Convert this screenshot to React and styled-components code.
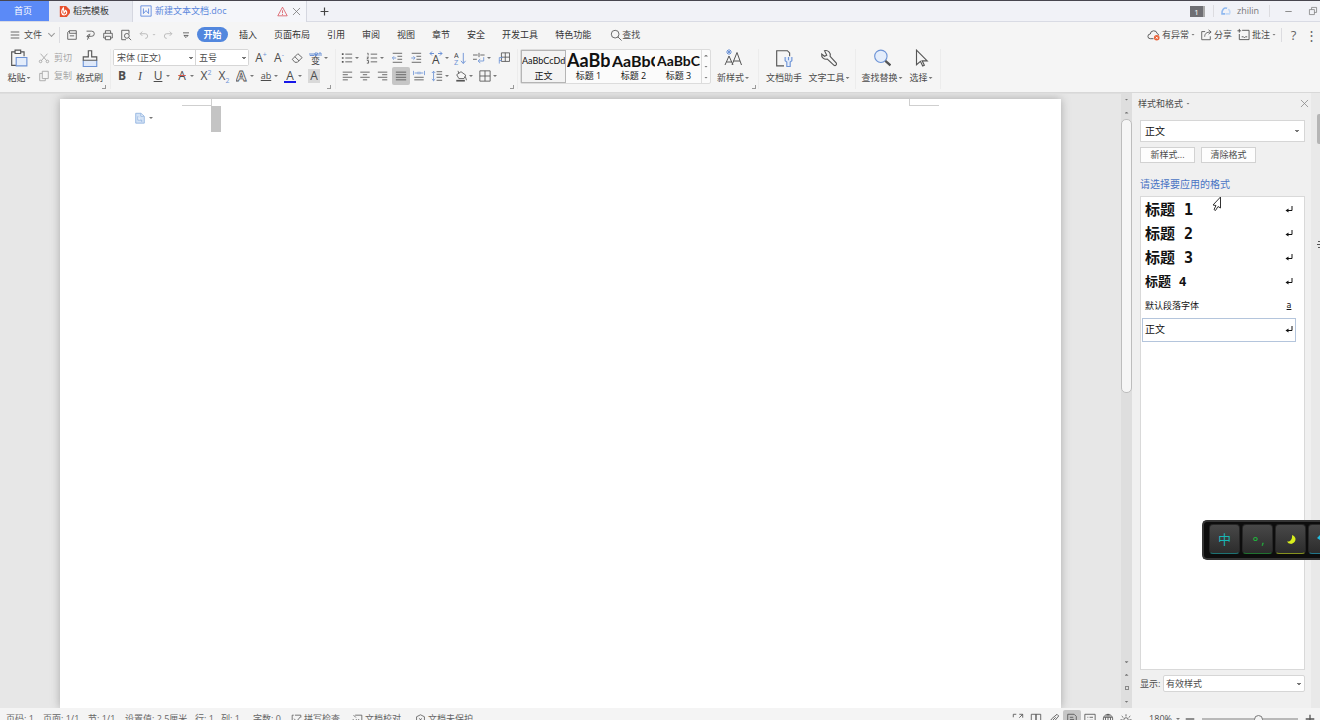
import { useState } from "react";
import styled, { createGlobalStyle } from "styled-components";

const tabs = ["插入", "页面布局", "引用", "审阅", "视图", "章节", "安全", "开发工具", "特色功能"];

const gallery = [
  { label: "正文", sample: "AaBbCcDd", size: 9 },
  { label: "标题 1", sample: "AaBb", size: 18, bold: true },
  { label: "标题 2", sample: "AaBbC", size: 16, bold: true },
  { label: "标题 3", sample: "AaBbCc", size: 14, bold: true },
];

const styleList = [
  { name: "标题 1", size: 15, bold: true },
  { name: "标题 2", size: 15, bold: true },
  { name: "标题 3", size: 15, bold: true },
  { name: "标题 4", size: 13, bold: true },
  { name: "默认段落字体", size: 9, mark: "a" },
  { name: "正文", size: 10 },
];

const blue = "#6d93d6";

const icons = {
  menu: <path d="M2 3.5h10M2 7h10M2 10.5h10" />,
  save: <path d="M2 4l2-2h8v10h-10zM4 2v3h8M4.500 8h5" />,
  output: <path d="M3 2.500h6a3 3 0 0 1 0 6h-5.500M6 6l-2.500 2.500 2.500 2.500M4 12.500l3-7" />,
  print: <path d="M4 5v-3h6v3M4 10.500h-2v-5.500h10v5.500h-2M4 8.500h6v4h-6z" />,
  preview: (
    <>
      <path d="M7 12.500H2v-11h8.500v4" />
      <circle cx="8" cy="8" r="2.800" />
      <path d="M10 10l3 3" />
    </>
  ),
  undo: <path d="M5 3l-2.500 2.500 2.500 2.500M2.500 5.500h6a2.500 2.500 0 0 1 0 5.500" />,
  redo: <path d="M9 3l2.500 2.500-2.500 2.500M11.500 5.500h-6a2.500 2.500 0 0 0 0 5.500" />,
  more: <path d="M3.500 4.500h7M4.500 7.500h5L7 10z" />,
  search: (
    <>
      <circle cx="6" cy="6" r="4.500" />
      <path d="M9 9l4.500 4.500" />
    </>
  ),
  cut: (
    <>
      <path d="M3 2l7 8M11 2l-7 8" />
      <circle cx="3" cy="11" r="1.500" />
      <circle cx="11" cy="11" r="1.500" />
    </>
  ),
  copy: <path d="M5 1.500h7v8.500h-7zM5 4h-3v8.500h6.500v-2.500" />,
  eraser: <path d="M1.500 8.500l6.500-6.500 5 4.500-5.500 5.500h-3zM4.500 5.500l5 5" />,
  bullets: (
    <>
      <path d="M5 2.500h8M5 7h8M5 11.500h8" />
      <path d="M2 1.500v2M2 6v2M2 10.500v2" strokeWidth="2" />
    </>
  ),
  numbers: (
    <>
      <path d="M5.500 2.500h7.500M5.500 7h7.500M5.500 11.500h7.500" />
      <path d="M1.500 1.500h1v2.500M1 6h2l-2 2h2M1 10h2v3h-2" />
    </>
  ),
  outdent: (
    <>
      <path d="M2 1.500h11M7.500 5h5.500M7.500 8.500h5.500M2 12h11" />
      <path d="M6 7h-4M3.500 5l-2 2 2 2" stroke={blue} />
    </>
  ),
  indent: (
    <>
      <path d="M2 1.500h11M7.500 5h5.500M7.500 8.500h5.500M2 12h11" />
      <path d="M1.500 7h4M4 5l2 2-2 2" stroke={blue} />
    </>
  ),
  wrap: (
    <>
      <path d="M0 3.500h5.500M0 8.500h4.500M8.500 3.500h5M7 1v5" />
      <path d="M12.500 6v4.500h-6M8.500 8l-2.500 2.500 2.500 2.500" stroke={blue} />
    </>
  ),
  ruler: (
    <>
      <path d="M4 1h9.500v10h-9.500zM8.500 1v10M4 6h9.500" />
      <path d="M1.500 13.500v-7h4M1.500 10h3" stroke={blue} />
    </>
  ),
  left: <path d="M2 2.500h11M2 5.500h6M2 8.500h11M2 11.500h6" />,
  center: <path d="M1.500 2.500h11M4.500 5.500h5M1.500 8.500h11M4.500 11.500h5" />,
  right: <path d="M1 2.500h11M6 5.500h6M1 8.500h11M6 11.500h6" />,
  justify: <path d="M1 2.500h12M1 5.500h12M1 8.500h12M1 11.500h12" />,
  distribute: (
    <>
      <path d="M1.500 8.500h11M1.500 11.500h11" />
      <path d="M.5 1v5M13.500 1v5M2 3.500h4M8 3.500h4M6 2v3M8 2v3" stroke={blue} />
    </>
  ),
  spacing: (
    <>
      <path d="M6.500 2h6.500M6.500 5h6.500M6.500 8.500h6.500M6.500 12h6.500" />
      <path d="M3 1.500v11M1 3.500l2-2 2 2M1 10.500l2 2 2-2" stroke={blue} />
    </>
  ),
  bucket: (
    <>
      <path d="M2 5.500l5-3.500 5.500 4-2 4h-6zM4.500 4l-1-3M12 7.500l1.500 4.500" />
      <path d="M1.500 12.500h10" strokeWidth="2" />
    </>
  ),
  border: <path d="M1 1h12v12h-12zM7 1v12M1 7h12" />,
  paste: (
    <>
      <path d="M4.500 2.500h-3v12h4M9.500 2.500h3v4" />
      <path d="M4.500 1h5v3h-5z" />
      <path d="M5.500 7.500h9.500v7.500h-9.500z" fill="#e4edfb" stroke={blue} />
    </>
  ),
  brush: (
    <>
      <path d="M2 10v5.500h12v-5.500" fill="#dfe9fa" stroke={blue} />
      <path d="M6.500 7v-5.500h3v5.500h4.500v3h-12v-3z" />
    </>
  ),
  helper: (
    <>
      <path d="M8 15h-6.500v-13.500h9.500l2 2v3" />
      <path d="M9 7v3.500l1.500 1v4h3v-4l1.500-1v-3.500M12 7v3" fill="#e4edfb" stroke={blue} />
    </>
  ),
  wrench: (
    <path d="M4 1.500a4 4 0 0 1 5 5l5.500 6c.7 1.500-.8 2.800-2 2l-6-5.500a4 4 0 0 1-5-4.500l2.500 2 2-1z" />
  ),
  find: (
    <>
      <circle cx="7" cy="6.500" r="5.500" fill="#e4edfb" stroke={blue} />
      <path d="M11 10.500l4.500 4" strokeWidth="2" />
    </>
  ),
  pointer: <path d="M4 1l9.500 9.500h-4.500l2 4-1.500.7-2-4.200-3.500 3z" />,
  cloud: (
    <>
      <path d="M7 11.500h-3.500a2.500 2.500 0 0 1 0-5 3.800 3.800 0 0 1 7.500-.500 2 2 0 0 1 1.500 2" />
      <circle cx="10.500" cy="10.500" r="3" fill="#ea6238" stroke="none" />
      <path d="M9.500 9.500l2 2M11.500 9.500l-2 2" stroke="#fff" />
    </>
  ),
  share: <path d="M6 3h-4v9.500h10v-4M5.500 9c0-3.500 2-5.500 7-5.500M10 1l3 2.500-3 2.500" />,
  comment: <path d="M5.500 2.500h7.500v10h-10.500v-6M2.500 1v4M.5 3h4M5 9.500h2l1 1 1-1h2" />,
  docTag: (
    <>
      <path d="M1 1h12v12h-12z" />
      <path d="M4 4v6l3-3.500 3 3.500v-6" />
    </>
  ),
  warn: <path d="M7 1.500l6 11h-12zM7 5.500v3.500M7 10v1.500" />,
  close: <path d="M2.500 2.500l9 9M11.500 2.500l-9 9" />,
  plus: <path d="M7 2v10M2 7h10" strokeWidth="1.500" />,
  minus: <path d="M2 7h10" strokeWidth="1.500" />,
  restore: <path d="M2 5h7v7h-7zM5 5v-3h7v7h-3" />,
  swirl: (
    <>
      <path d="M9 3c-4-1.500-7 2-6.500 7h4" strokeWidth="2" />
      <path d="M7 10h5c1-2 .5-4.500-1.500-6" stroke="#c2d9f7" strokeWidth="2" />
    </>
  ),
  check: <path d="M3.500 1.500h-2v11h11v-4M5 1.500h7.500v3M4 6l3 3.500 5-6" />,
  proof: <path d="M4 1.500h8.500v11h-11v-6M2 1.500l3 3M5 6.500l4 4M9 6.500l-4 4" />,
  shield: <path d="M7 1l5 2.500v5.500l-5 4-5-4v-5.500zM5 5.500l4 3.500M9 5.500l-4 3.500" />,
  expand: <path d="M8.500 1.500h4v4M12.500 1.500l-4 4M1.500 5v-3.500h3.500M1.500 9v3.500h3.500M12.500 9v3.500h-3.500" />,
  book: <path d="M1.500 1.500h5.500v11h-5.500zM7 1.500h5.500v11h-5.500z" />,
  pen: <path d="M2 12.500l2-5.500 6.500-5.500 2 2-5.500 6.500zM4 10l5-5" />,
  page: <path d="M2 1.500h7.500l2.500 2.500v9h-10zM4.500 5h4M4.500 7.500h5M4.500 10h5" />,
  outline: <path d="M1 1.500h12v11h-12zM4 5h1M6.500 5h4M4 8.500h1M6.500 8.500h4" />,
  globe: (
    <>
      <circle cx="7" cy="7" r="5.500" />
      <path d="M7 1.500v11M2 5h10M2 9h10M7 1.500c-4 3-4 8 0 11M7 1.500c4 3 4 8 0 11" />
    </>
  ),
  sun: (
    <>
      <circle cx="7" cy="8" r="2.500" />
      <path d="M7 1.500v2.500M2 3.500l2 2M12 3.500l-2 2M.5 8h2.500M11 8h2.500M2 12.500l2-2M12 12.500l-2-2" />
    </>
  ),
  docBlue: <path d="M2 1.500h6l4 3.500v8h-10zM8 1.500v3.500h3.500M4.500 5v4.500h4.500v2" fill="#d4e3f6" />,
};

function Icon({ name, size = 12, box = 14, color }) {
  return (
    <Svg width={size} height={size} viewBox={`0 0 ${box} ${box}`} $color={color} aria-hidden="true">
      {icons[name]}
    </Svg>
  );
}

function Tool({ name, label, arrow, active, children }) {
  return (
    <ToolButton type="button" aria-label={label} $arrow={arrow} $active={active}>
      {name ? <Icon name={name} size={12} /> : children}
      {arrow && <Arrow />}
    </ToolButton>
  );
}

function Big({ name, label, arrow, width, children }) {
  return (
    <BigButton type="button" $width={width}>
      {children || <Icon name={name} size={18} box={16} />}
      <BigLabel>
        {label}
        {arrow && <Arrow />}
      </BigLabel>
    </BigButton>
  );
}

function ReturnMark() {
  return (
    <Svg width="8" height="8" viewBox="0 0 8 8" $color="#111" aria-hidden="true">
      <path d="M7 0v4.500h-5" />
      <path d="M3.500 2.500v4l-3-2z" fill="#111" stroke="none" />
    </Svg>
  );
}

function TitleBar() {
  return (
    <TitleStrip>
      <HomeTab type="button">首页</HomeTab>
      <DocTab type="button" $width={84}>
        <Svg width="11" height="11" viewBox="0 0 14 14" aria-hidden="true">
          <path d="M1 0h8l5 5v4l-4 5h-9z" fill="#e8502e" stroke="none" />
          <path d="M5.500 2.500c-3 4-3 8 1 9 4-.5 4-4 2-6l-2 3z" stroke="#fff" fill="none" strokeWidth="1.500" />
        </Svg>
        稻壳模板
      </DocTab>
      <DocTab type="button" $width={174} $active>
        <Icon name="docTag" size={12} color="#5b86dc" />
        <TabName>新建文本文档.doc</TabName>
        <Icon name="warn" size={11} color="#d9525a" />
        <Icon name="close" size={11} color="#777" />
      </DocTab>
      <PlainButton type="button" aria-label="新建" $width={34}>
        <Icon name="plus" size={11} color="#444" />
      </PlainButton>
      <Spacer />
      <Badge>1</Badge>
      <Divider $height={12} />
      <User href="#user">
        <Icon name="swirl" size={11} color="#8fb8ef" />
        zhilin
      </User>
      <Divider $height={12} />
      <PlainButton type="button" aria-label="最小化" $width={36}>
        <Icon name="minus" size={9} color="#888" />
      </PlainButton>
      <PlainButton type="button" aria-label="还原" $width={14}>
        <Icon name="restore" size={10} color="#777" />
      </PlainButton>
    </TitleStrip>
  );
}

function MenuBar() {
  return (
    <MenuStrip>
      <FileButton type="button">
        <Icon name="menu" size={12} />
        文件
        <Chevron />
      </FileButton>
      <Divider $height={16} />
      <QuickBar>
        <Tool name="save" label="保存" />
        <Tool name="output" label="输出" />
        <Tool name="print" label="打印" />
        <Tool name="preview" label="打印预览" />
        <Faded>
          <Tool name="undo" label="撤销" arrow />
          <Tool name="redo" label="恢复" />
        </Faded>
        <Tool name="more" label="自定义" />
      </QuickBar>
      <StartTab type="button">开始</StartTab>
      <TabList>
        {tabs.map((tab) => (
          <MenuTab type="button" key={tab}>{tab}</MenuTab>
        ))}
      </TabList>
      <SearchButton type="button">
        <Icon name="search" size={12} />
        查找
      </SearchButton>
      <Spacer />
      <RightTools>
        <SmallAction type="button"><Icon name="cloud" size={13} />有异常<Arrow /></SmallAction>
        <SmallAction type="button"><Icon name="share" size={12} />分享</SmallAction>
        <SmallAction type="button"><Icon name="comment" size={13} />批注<Arrow /></SmallAction>
        <Divider $height={14} />
        <HelpButton type="button" aria-label="帮助">?</HelpButton>
        <HelpButton type="button" aria-label="更多">⋮</HelpButton>
      </RightTools>
    </MenuStrip>
  );
}

function Ribbon() {
  return (
    <RibbonStrip>
      <Group>
        <Big name="paste" label="粘贴" arrow width={38} />
        <Stack>
          <ClipButton type="button" disabled><Icon name="cut" size={12} />剪切</ClipButton>
          <ClipButton type="button" disabled><Icon name="copy" size={12} />复制</ClipButton>
        </Stack>
        <Big name="brush" label="格式刷" width={31} />
        <Launcher $after={4} />
      </Group>
      <Group $pad={2}>
        <Stack>
          <ToolRow>
            <Combo>
              <FontSelect aria-label="字体" $width={81}><option>宋体 (正文)</option></FontSelect>
              <FontSelect aria-label="字号" $width={53}><option>五号</option></FontSelect>
            </Combo>
            <Tool label="增大字号"><Letter>A<sup>+</sup></Letter></Tool>
            <Tool label="减小字号"><Letter>A<sup>-</sup></Letter></Tool>
            <Tool name="eraser" label="清除格式" />
            <Tool label="拼音指南" arrow>
              <Pinyin>
                <path d="M1 2v2.500h2v-2.500M3 4.500h2v-2.500M6 3.500h2.500v-1.500h-2.500v2.500h2.500M10 5v-3h2v3" stroke={blue} />
                <text x="2" y="13" stroke="none" fill="#444">变</text>
              </Pinyin>
            </Tool>
          </ToolRow>
          <ToolRow>
            <Tool label="加粗"><Letter $bold>B</Letter></Tool>
            <Tool label="倾斜"><Letter $italic>I</Letter></Tool>
            <Tool label="下划线" arrow><Letter $line="underline">U</Letter></Tool>
            <Tool label="删除线" arrow><Letter $line="line-through #d8574f">A</Letter></Tool>
            <Tool label="上标"><Letter>X<sup>2</sup></Letter></Tool>
            <Tool label="下标"><Letter>X<sub>2</sub></Letter></Tool>
            <Tool label="文字效果" arrow>
              <Svg width="12" height="14" viewBox="0 0 12 14" aria-hidden="true">
                <text x="0" y="12" fontSize="15" fontWeight="700" strokeWidth="0.8">A</text>
              </Svg>
            </Tool>
            <Tool label="突出显示" arrow><SmallLetter>ab</SmallLetter></Tool>
            <Tool label="字体颜色" arrow><ColorLetter>A</ColorLetter></Tool>
            <Tool label="字符底纹"><ShadeLetter>A</ShadeLetter></Tool>
          </ToolRow>
        </Stack>
        <Launcher $after={2} />
      </Group>
      <Group $pad={2}>
        <Stack>
          <ToolRow $gap={1}>
            <Tool name="bullets" label="项目符号" arrow />
            <Tool name="numbers" label="编号" arrow />
            <Tool name="outdent" label="减少缩进" />
            <Tool name="indent" label="增加缩进" />
            <Tool label="中文版式" arrow>
              <Svg width="14" height="14" viewBox="0 0 14 14" aria-hidden="true">
                <path d="M5 2.500h-4M3 .5l-2 2 2 2M9 2.500h4M11 .5l2 2-2 2" stroke={blue} />
                <text x="3" y="13" fontSize="12" fill="#444" stroke="none">A</text>
              </Svg>
            </Tool>
            <Tool label="排序">
              <Svg width="13" height="13" viewBox="0 0 14 14" aria-hidden="true">
                <text x="0" y="6" fontSize="8" fill="#444" stroke="none">A</text>
                <text x="0" y="14" fontSize="8" fill={blue} stroke="none">Z</text>
                <path d="M10 1v11M7.500 9.500l2.500 3 2.500-3" stroke={blue} />
              </Svg>
            </Tool>
            <Tool name="wrap" label="换行" arrow />
            <Tool name="ruler" label="制表位" />
          </ToolRow>
          <ToolRow>
            <Tool name="left" label="左对齐" />
            <Tool name="center" label="居中" />
            <Tool name="right" label="右对齐" />
            <Tool name="justify" label="两端对齐" active />
            <Tool name="distribute" label="分散对齐" />
            <Tool name="spacing" label="行距" arrow />
            <Tool name="bucket" label="底纹" arrow />
            <Tool name="border" label="边框" arrow />
          </ToolRow>
        </Stack>
        <Launcher $after={1} />
      </Group>
      <Group $pad={2}>
        <Gallery>
          {gallery.map((g, i) => (
            <Card type="button" key={g.label} $active={i === 0}>
              <Sample $size={g.size} $bold={g.bold}>{g.sample}</Sample>
              <span>{g.label}</span>
            </Card>
          ))}
          <GalleryScroll>
            <Arrow $up />
            <Arrow />
            <Arrow />
          </GalleryScroll>
        </Gallery>
        <Big label="新样式" arrow width={44}>
          <Svg width="18" height="18" viewBox="0 0 18 18" aria-hidden="true">
            <path d="M5 0v6M2 3h6M3 1l4 4M7 1l-4 4" stroke={blue} />
            <path d="M1 16l4-9 4 9M2.500 13h5M8 16l5-12.500 4.500 12.500M9.500 12h6.500" />
          </Svg>
        </Big>
        <Launcher $after={0} />
      </Group>
      <Group $pad={3}>
        <Big name="helper" label="文档助手" width={44} />
        <Big name="wrench" label="文字工具" arrow width={46} />
      </Group>
      <Group $pad={3}>
        <Big name="find" label="查找替换" arrow width={46} />
        <Big name="pointer" label="选择" arrow width={32} />
      </Group>
    </RibbonStrip>
  );
}

function StylePane() {
  const [current, setCurrent] = useState("正文");

  return (
    <Pane>
      <PaneHead>
        样式和格式
        <Arrow />
        <Spacer />
        <CloseButton type="button" aria-label="关闭"><Icon name="close" size={11} color="#888" /></CloseButton>
      </PaneHead>
      <PaneSelect aria-label="当前样式" value={current} onChange={(e) => setCurrent(e.target.value)}>
        {styleList.map((s) => (
          <option key={s.name}>{s.name}</option>
        ))}
      </PaneSelect>
      <PaneButtons>
        <PaneButton type="button">新样式...</PaneButton>
        <PaneButton type="button">清除格式</PaneButton>
      </PaneButtons>
      <PaneTitle>请选择要应用的格式</PaneTitle>
      <List>
        {styleList.map((s) => (
          <ListRow
            type="button"
            key={s.name}
            $size={s.size}
            $bold={s.bold}
            $active={s.name === current}
            onClick={() => setCurrent(s.name)}
          >
            {s.name}
            {s.mark ? <CharMark>{s.mark}</CharMark> : <ReturnMark />}
          </ListRow>
        ))}
      </List>
      <PaneFoot>
        <label htmlFor="filter">显示:</label>
        <FilterSelect id="filter"><option>有效样式</option></FilterSelect>
      </PaneFoot>
    </Pane>
  );
}

function StatusBar() {
  const [zoom, setZoom] = useState(180);

  return (
    <StatusStrip>
      <StatusItem $width={37}>页码: 1</StatusItem>
      <StatusItem $width={45}>页面: 1/1</StatusItem>
      <StatusItem $width={37}>节: 1/1</StatusItem>
      <StatusItem $width={70}>设置值: 2.5厘米</StatusItem>
      <StatusItem $width={26}>行: 1</StatusItem>
      <StatusItem $width={32}>列: 1</StatusItem>
      <StatusItem $width={38}>字数: 0</StatusItem>
      <StatusItem $width={61}><Icon name="check" size={11} />拼写检查</StatusItem>
      <StatusItem $width={63}><Icon name="proof" size={11} />文档校对</StatusItem>
      <StatusItem $width={60}><Icon name="shield" size={11} />文档未保护</StatusItem>
      <Spacer />
      <Tool name="expand" label="全屏" />
      <Tool name="book" label="阅读版式" />
      <Tool name="pen" label="写作模式" />
      <Tool name="page" label="页面视图" active />
      <Tool name="outline" label="大纲" />
      <Tool name="globe" label="网页版式" />
      <Tool name="sun" label="护眼模式" />
      <ZoomLabel>{zoom}%<Arrow /></ZoomLabel>
      <Tool name="minus" label="缩小" />
      <Slider
        type="range"
        aria-label="缩放"
        min="0"
        max="300"
        value={zoom}
        onChange={(e) => setZoom(e.target.value)}
      />
      <Tool name="plus" label="放大" />
    </StatusStrip>
  );
}

function ImeBar() {
  return (
    <Ime>
      <Key type="button" $color="#19b5b5">中</Key>
      <Key type="button" $color="#1fb33c">
        <span>⚬,</span>
      </Key>
      <Key type="button" $color="#d8ee1c" aria-label="半角">
        <svg width="10" height="10" viewBox="0 0 10 10" aria-hidden="true">
          <path d="M6 1a4.500 4.500 0 1 1-5 6.500c3.500.5 5.500-2.500 5-6.500z" fill="#d8ee1c" />
        </svg>
      </Key>
      <Key type="button" $color="#22bde0" aria-label="皮肤">
        <svg width="14" height="12" viewBox="0 0 14 12" aria-hidden="true">
          <path d="M0 5l4-4h6l4 4-3 2v5h-8v-5z" fill="#22bde0" />
        </svg>
      </Key>
    </Ime>
  );
}

export default function App() {
  return (
    <>
      <GlobalStyle />
      <Shell>
        <TitleBar />
        <MenuBar />
        <Ribbon />
        <Workspace>
          <Canvas>
            <Page>
              <Corners>
                <Corner />
                <Corner $right />
              </Corners>
              <FirstLine>
                <PageTool type="button" aria-label="文档选项">
                  <Icon name="docBlue" size={12} color="#91b3df" />
                  <Arrow />
                </PageTool>
                <Selection />
              </FirstLine>
            </Page>
          </Canvas>
          <ScrollBar>
            <ScrollCap>
              <Arrow />
              <Arrow $up />
            </ScrollCap>
            <Thumb />
            <Spacer />
            <ScrollFoot>
              <Arrow />
              <Arrow $up />
              <Dot />
              <Arrow />
            </ScrollFoot>
          </ScrollBar>
          <StylePane />
          <Rail>
            <RailThumb />
            <RailMark width="8" height="8" viewBox="0 0 8 8" aria-hidden="true">
              <path d="M1 1.500h7M0 4.500h8M1 7.500h7" />
            </RailMark>
          </Rail>
        </Workspace>
        <StatusBar />
      </Shell>
      <ImeBar />
      <Cursor width="10" height="16" viewBox="0 0 10 16" aria-hidden="true">
        <path d="M8.500 1v11l-2.500-1.500-2.500 4-1.500-1 2-4-3-.5z" fill="#fff" stroke="#333" />
      </Cursor>
    </>
  );
}

const GlobalStyle = createGlobalStyle`
  * {
    box-sizing: border-box;
  }
  body {
    margin: 0;
    overflow: hidden;
    background: #e7e7e7;
  }
  body, button, select, input {
    font-family: "Open Sans", "Noto Sans CJK SC", sans-serif;
    font-size: 9px;
    line-height: 12px;
    color: #4c4c4c;
  }
  button {
    border: 0;
    padding: 0;
    background: none;
    white-space: nowrap;
  }
`;
const Shell = styled.div`
  height: calc(100vh + 10px);
  display: flex;
  flex-direction: column;
`;
const Svg = styled.svg`
  flex: none;
  fill: none;
  stroke: ${(p) => p.$color || "#555"};
  stroke-width: 1;
`;
const Spacer = styled.div`
  flex: 1;
`;
const Divider = styled.div`
  width: 1px;
  height: ${(p) => p.$height}px;
  background: #dcdce0;
`;
const Arrow = styled.span`
  flex: none;
  width: 4px;
  height: 2px;
  background: #777;
  clip-path: ${(p) => (p.$up ? "polygon(50% 0, 100% 100%, 0 100%)" : "polygon(0 0, 100% 0, 50% 100%)")};
`;

/* title bar */
const TitleStrip = styled.header`
  flex: none;
  height: 22px;
  display: flex;
  align-items: center;
  border-top: 1px solid #48464f;
  border-bottom: 1px solid #d9dbe4;
  background: #f1f2f7;
`;
const HomeTab = styled.button`
  width: 49px;
  height: 20px;
  padding-right: 3px;
  background: #5b8af7;
  color: #fff;
`;
const DocTab = styled.button`
  width: ${(p) => p.$width}px;
  height: 21px;
  display: flex;
  align-items: center;
  gap: 3px;
  padding: 0 4px 0 ${(p) => (p.$active ? 7 : 10)}px;
  border-right: 1px solid #d5d7e0;
  background: ${(p) => (p.$active ? "#f5f6fa" : "#e8eaf1")};
  color: ${(p) => (p.$active ? "#5b86dc" : "#333")};
`;
const TabName = styled.span`
  flex: 1;
  text-align: left;
`;
const PlainButton = styled.button`
  width: ${(p) => p.$width}px;
  height: 20px;
  display: flex;
  align-items: center;
  justify-content: center;
`;
const Badge = styled.span`
  width: 15px;
  height: 11px;
  margin-right: 8px;
  border-right: 2px solid #aaa;
  background: #6f6f74;
  color: #fff;
  font-size: 8px;
  line-height: 11px;
  text-align: center;
`;
const User = styled.a`
  display: flex;
  align-items: center;
  gap: 6px;
  padding: 0 10px 0 6px;
  color: #777;
  text-decoration: none;
`;

/* menu row */
const MenuStrip = styled.nav`
  flex: none;
  height: 25px;
  display: flex;
  align-items: center;
  padding-left: 9px;
  background: #f5f5f5;
`;
const FileButton = styled.button`
  width: 50px;
  display: flex;
  align-items: center;
  gap: 3px;
`;
const Chevron = styled.span`
  width: 5px;
  height: 5px;
  margin: 0 0 3px 4px;
  border: solid #999;
  border-width: 0 1px 1px 0;
  transform: rotate(45deg);
`;
const QuickBar = styled.div`
  display: flex;
  width: 137px;
  padding-left: 3px;
`;
const Faded = styled.div`
  display: flex;
  opacity: 0.4;
`;
const ToolButton = styled.button`
  width: ${(p) => (p.$arrow ? 24 : 18)}px;
  height: 18px;
  display: flex;
  align-items: center;
  justify-content: ${(p) => (p.$arrow ? "flex-start" : "center")};
  gap: 2px;
  padding-left: ${(p) => (p.$arrow ? 3 : 0)}px;
  border-radius: 2px;
  background: ${(p) => (p.$active ? "#c6c6c6" : "none")};
`;
const StartTab = styled.button`
  width: 31px;
  height: 15px;
  border-radius: 8px;
  background: #5287de;
  color: #fff;
  font-weight: 700;
`;
const TabList = styled.div`
  display: flex;
  gap: 17px;
  padding: 0 19px 0 11px;
`;
const MenuTab = styled.button`
  color: #333;
`;
const SearchButton = styled.button`
  display: flex;
  align-items: center;
`;
const RightTools = styled.div`
  display: flex;
  align-items: center;
  gap: 5px;
  padding-right: 2px;
`;
const SmallAction = styled.button`
  display: flex;
  align-items: center;
  gap: 2px;
`;
const HelpButton = styled.button`
  width: 13px;
  font-size: 13px;
  color: #666;
`;

/* ribbon */
const RibbonStrip = styled.section`
  flex: none;
  height: 46px;
  display: flex;
  padding: 2px 0 3px;
  border-bottom: 1px solid #d8d8d8;
  background: #f5f5f5;
`;
const Group = styled.div`
  display: flex;
  padding: 0 ${(p) => p.$pad || 0}px;
  border-right: 1px solid #ececec;
`;
const Stack = styled.div`
  display: flex;
  flex-direction: column;
`;
const ToolRow = styled.div`
  display: flex;
  gap: ${(p) => p.$gap || 0}px;
`;
const BigButton = styled.button`
  width: ${(p) => p.$width}px;
  height: 35px;
  display: flex;
  flex-direction: column;
  align-items: center;
  justify-content: space-between;
`;
const BigLabel = styled.span`
  display: flex;
  align-items: center;
  gap: 1px;
`;
const ClipButton = styled.button`
  width: 36px;
  height: 18px;
  display: flex;
  align-items: center;
  gap: 4px;
  color: #555;
  opacity: 0.5;
`;
const Launcher = styled.span`
  align-self: flex-end;
  width: 4px;
  height: 4px;
  margin: 0 ${(p) => p.$after}px 0 -3px;
  border: solid #999;
  border-width: 0 1px 1px 0;
`;
const Combo = styled.div`
  display: flex;
  height: 17px;
  margin-right: 3px;
  border: 1px solid #d6d6d6;
  border-radius: 2px;
  background: #fff;
`;
const chevronArrow = `
  appearance: none;
  background-color: #fff;
  background-image: linear-gradient(#777, #777), linear-gradient(#777, #777);
  background-size: 4px 1px, 2px 1px;
  background-repeat: no-repeat;
`;
const FontSelect = styled.select`
  ${chevronArrow}
  width: ${(p) => p.$width}px;
  height: 15px;
  padding: 0 3px;
  border: 0;
  background-position: right 2px top 7px, right 3px top 8px;

  & + & {
    border-left: 1px solid #d6d6d6;
  }
`;
const Letter = styled.span`
  width: 12px;
  font-size: 12px;
  line-height: 14px;
  font-weight: ${(p) => (p.$bold ? 700 : 400)};
  font-style: ${(p) => (p.$italic ? "italic" : "normal")};
  font-family: ${(p) => (p.$italic ? '"Liberation Serif", serif' : "inherit")};
  text-decoration: ${(p) => p.$line || "none"};

  sup, sub {
    font-size: 7px;
    line-height: 0;
    color: ${blue};
  }
`;
const Pinyin = styled(Svg).attrs({ width: 13, height: 14, viewBox: "0 0 13 14" })`
  font-size: 9px;
`;
const SmallLetter = styled(Letter)`
  font-size: 9px;
  text-decoration: underline;
`;
const ColorLetter = styled(Letter)`
  height: 13px;
  line-height: 12px;
  border-bottom: 2px solid #1717e8;
`;
const ShadeLetter = styled(Letter)`
  background: #d9d9d9;
`;
const Gallery = styled.div`
  display: flex;
  height: 35px;
  border: 1px solid #dcdcdc;
  border-radius: 2px;
  background: #fbfbfb;
`;
const Card = styled.button`
  width: 45px;
  display: flex;
  flex-direction: column;
  justify-content: space-between;
  align-items: center;
  overflow: hidden;
  color: #111;
  border: 1px solid ${(p) => (p.$active ? "#b5b5b5" : "transparent")};
  background: ${(p) => (p.$active ? "#f3f3f3" : "none")};
`;
const Sample = styled.span`
  width: 100%;
  height: 19px;
  overflow: hidden;
  text-align: left;
  font-family: Lato, sans-serif;
  font-size: ${(p) => p.$size}px;
  line-height: 19px;
  font-weight: ${(p) => (p.$bold ? 700 : 400)};
`;
const GalleryScroll = styled.div`
  width: 9px;
  display: flex;
  flex-direction: column;
  align-items: center;
  justify-content: space-around;
  border-left: 1px solid #dcdcdc;
`;

/* document */
const Workspace = styled.main`
  flex: 1;
  min-height: 0;
  display: flex;
  background: #e7e7e7;
`;
const Canvas = styled.div`
  flex: 1;
  display: flex;
  padding: 5px 60px 0;
  border-top: 1px solid #dedede;
  overflow: hidden;
`;
const Page = styled.article`
  flex: 1;
  background: #fff;
  box-shadow: 0 0 9px #a8a8a8;
`;
const Corners = styled.div`
  display: flex;
  justify-content: space-between;
  padding: 0 122px;
`;
const Corner = styled.span`
  width: 30px;
  height: 7px;
  border: solid #cfcfcf;
  border-width: ${(p) => (p.$right ? "0 0 1px 1px" : "0 1px 1px 0")};
`;
const FirstLine = styled.div`
  display: flex;
  align-items: flex-start;
  padding-left: 74px;
`;
const PageTool = styled.button`
  width: 77px;
  height: 24px;
  display: flex;
  align-items: center;
  gap: 3px;
`;
const Selection = styled.span`
  width: 10px;
  height: 26px;
  background: #c4c4c4;
`;
const ScrollBar = styled.div`
  width: 11px;
  display: flex;
  flex-direction: column;
  background: #dedede;
`;
const ScrollCap = styled.div`
  height: 26px;
  display: flex;
  flex-direction: column;
  align-items: center;
  justify-content: space-around;
`;
const Thumb = styled.div`
  height: 274px;
  border: 1px solid #bdbdbd;
  border-radius: 5px;
  background: #f6f6f6;
`;
const ScrollFoot = styled.div`
  height: 52px;
  display: flex;
  flex-direction: column;
  align-items: center;
  justify-content: space-around;
`;
const Dot = styled.span`
  width: 4px;
  height: 4px;
  border: 1px solid #888;
`;

/* style pane */
const Pane = styled.aside`
  width: 179px;
  display: flex;
  flex-direction: column;
  padding: 3px 6px 16px 8px;
  background: #f0f0f0;
`;
const PaneHead = styled.div`
  height: 15px;
  display: flex;
  align-items: center;
  gap: 3px;
  margin: 0 -5px 9px -2px;
`;
const CloseButton = styled.button`
  display: flex;
`;
const PaneSelect = styled.select`
  ${chevronArrow}
  height: 22px;
  padding: 0 4px;
  border: 1px solid #d6d6d6;
  border-radius: 0;
  color: #111;
  font-size: 10px;
  background-position: right 5px top 9px, right 6px top 10px;
`;
const PaneButtons = styled.div`
  display: flex;
  gap: 6px;
  margin: 5px 0 14px;
`;
const PaneButton = styled.button`
  width: 55px;
  height: 16px;
  border: 1px solid #d2d2d2;
  background: #fdfdfd;
`;
const PaneTitle = styled.h2`
  margin: 0 0 4px;
  color: #4a74c4;
  font-size: 10px;
  line-height: 15px;
  font-weight: 400;
`;
const List = styled.div`
  flex: 1;
  display: flex;
  flex-direction: column;
  padding: 1px;
  border: 1px solid #d9d9d9;
  background: #fff;
`;
const ListRow = styled.button`
  width: 154px;
  height: 24px;
  display: flex;
  align-items: center;
  justify-content: space-between;
  padding: 0 2px;
  border: 1px solid ${(p) => (p.$active ? "#b4c5dc" : "transparent")};
  color: #111;
  font-family: "DejaVu Sans Mono", "Noto Sans CJK SC", monospace;
  font-size: ${(p) => p.$size}px;
  line-height: 20px;
  font-weight: ${(p) => (p.$bold ? 700 : 400)};
`;
const CharMark = styled.span`
  width: 8px;
  font-size: 8px;
  text-decoration: underline;
`;
const PaneFoot = styled.div`
  display: flex;
  align-items: center;
  justify-content: space-between;
  margin-top: 5px;
`;
const FilterSelect = styled.select`
  ${chevronArrow}
  width: 142px;
  height: 17px;
  padding: 0 2px;
  border: 1px solid #d6d6d6;
  border-radius: 2px;
  background-position: right 3px top 7px, right 4px top 8px;
`;
const Rail = styled.div`
  width: 9px;
  padding-top: 21px;
  overflow: hidden;
  background: #e9e9e9;
`;
const RailThumb = styled.div`
  height: 30px;
  margin-left: 6px;
  border-radius: 2px 0 0 2px;
  background: #b5b5b5;
`;
const RailMark = styled(Svg)`
  margin: 96px 0 0 6px;
`;

/* status bar */
const StatusStrip = styled.footer`
  flex: none;
  height: 22px;
  display: flex;
  align-items: center;
  padding: 0 1px 0 6px;
  background: #f4f4f4;
  white-space: nowrap;
`;
const StatusItem = styled.span`
  width: ${(p) => p.$width}px;
  display: flex;
  align-items: center;
  gap: 2px;
  color: #666;
`;
const ZoomLabel = styled.span`
  width: 46px;
  display: flex;
  align-items: center;
  justify-content: flex-end;
  gap: 4px;
  padding-right: 1px;
`;
const Slider = styled.input`
  appearance: none;
  width: 96px;
  height: 2px;
  margin: 0 3px;
  background: #b9b9b9;

  &::-webkit-slider-thumb {
    appearance: none;
    width: 9px;
    height: 9px;
    border: 1px solid #777;
    border-radius: 50%;
    background: #f4f4f4;
  }
`;

/* floating input method bar */
const Ime = styled.div`
  position: fixed;
  top: 520px;
  right: 0;
  width: 118px;
  height: 40px;
  display: flex;
  gap: 2px;
  padding: 2px 0 5px 5px;
  overflow: hidden;
  border: 2px solid #343434;
  border-right: 0;
  border-radius: 5px 0 0 5px;
  background: #0d0d0d;
`;
const Key = styled.button`
  flex: none;
  width: 31px;
  height: 30px;
  border-radius: 4px;
  border: 1px solid #262626;
  border-bottom-color: color-mix(in srgb, ${(p) => p.$color} 55%, #222);
  background: linear-gradient(#484848, #2c2c2c);
  color: ${(p) => p.$color};
  font-size: 13px;
`;
const Cursor = styled.svg`
  position: fixed;
  top: 196px;
  left: 1212px;
`;
